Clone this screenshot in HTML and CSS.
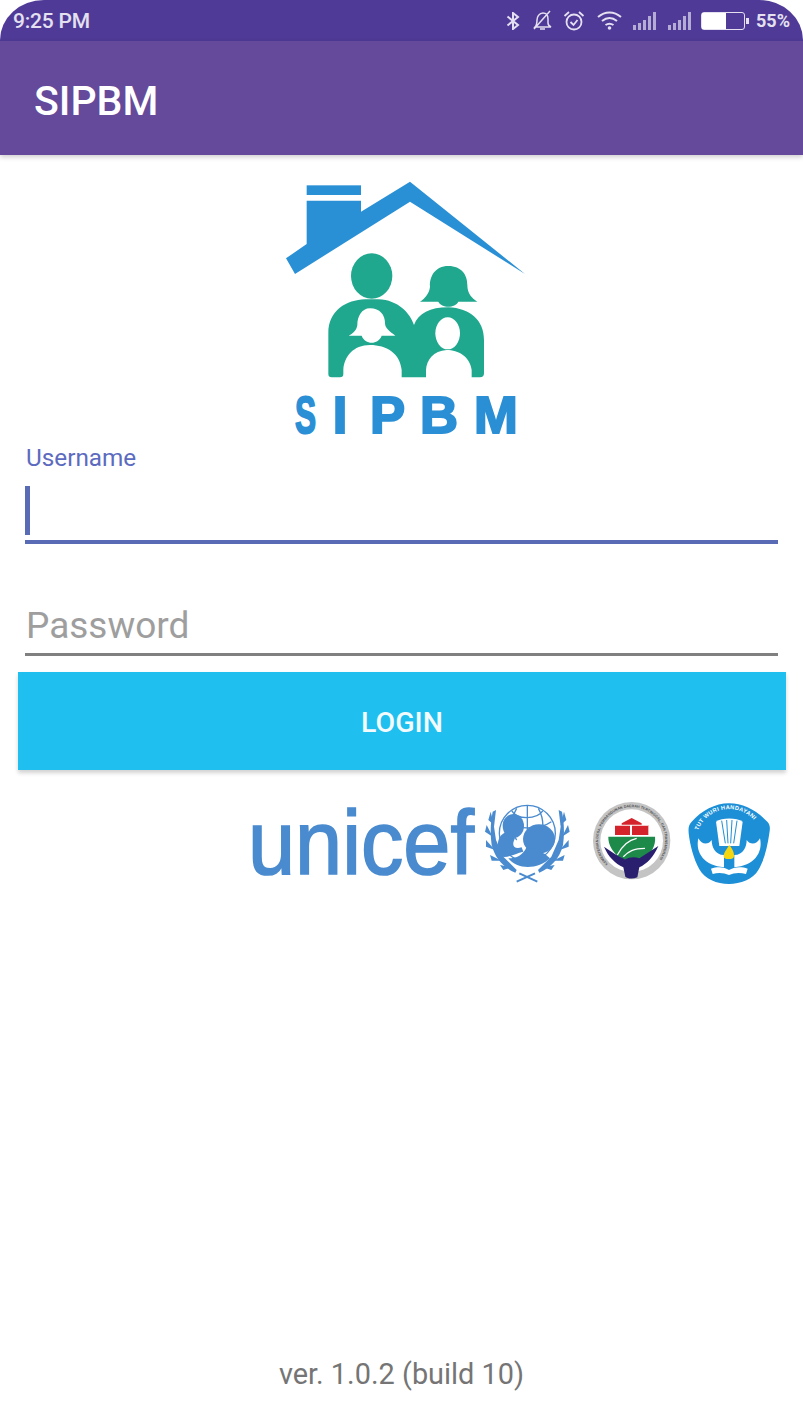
FILE: index.html
```html
<!DOCTYPE html>
<html>
<head>
<meta charset="utf-8">
<meta name="viewport" content="width=device-width, initial-scale=1.0">
<title>SIPBM</title>
<link rel="stylesheet" href="styles.css">
</head>
<body>
<div class="screen">
	<div class="status-bar">
		<span class="clock">9:25 PM</span>
		<div class="status-icons">
			<svg class="ico" width="14" height="18" viewBox="0 0 14 18"><path d="M1.500 4.500 12 13 7 17V1l5 4L1.500 13.500" fill="none" stroke="#e4e0f0" stroke-width="2"/></svg>
			<svg class="ico ico-bell" width="22" height="21" viewBox="0 0 22 21"><path d="M4 17c2-2 2-4 2-7s2-7 6-7 5 3 5 6v4c0 2 1 3 3 4zM9 19h5M3 19 19 1" fill="none" stroke="#e4e0f0" stroke-width="1.500"/></svg>
			<svg class="ico ico-alarm" width="22" height="22" viewBox="0 0 22 22"><circle cx="11" cy="12" r="7.500" fill="none" stroke="#e4e0f0" stroke-width="1.800"/><path d="M7.500 12l3 3 4-5M1.500 6 6 2M20.500 6 16 2" fill="none" stroke="#e4e0f0" stroke-width="1.800"/></svg>
			<svg class="ico ico-wifi" width="25" height="19" viewBox="0 0 25 19"><path d="M1 6c7-6 16-6 23 0M5 10c5-4 10-4 15 0M8.500 14c3-2 5-2 8 0" fill="none" stroke="#e4e0f0" stroke-width="2"/><circle cx="12.500" cy="17" r="1.800" fill="#e4e0f0"/></svg>
			<svg class="ico ico-signal" width="24" height="18" viewBox="0 0 24 18"><path d="M0 13h3v5H0zM5 11h3v7H5zM10 8h3v10h-3zM15 4h3v14h-3zM20 0h3v18h-3z" fill="#b5acd6"/></svg>
			<svg class="ico ico-signal" width="24" height="18" viewBox="0 0 24 18"><path d="M0 13h3v5H0zM5 11h3v7H5zM10 8h3v10h-3zM15 4h3v14h-3zM20 0h3v18h-3z" fill="#b5acd6"/></svg>
			<div class="battery"><div class="battery-fill"></div></div>
			<span class="percent">55%</span>
		</div>
	</div>
	<div class="app-bar">SIPBM</div>

	<svg class="logo" width="270" height="275" viewBox="0 0 810 825" role="img" aria-label="SIPBM">
		<path class="roof" d="M48 265 110 222V92H273V125L420 35 765 312 420 95 75 312Z"/>
		<rect class="roof" x="110" y="46" width="163" height="29"/>
		<ellipse class="fam" cx="305" cy="318" rx="62" ry="68"/>
		<path class="fam" d="M535 288C495 288 478 320 480 350 478 370 465 385 450 395H505C515 415 555 415 565 395H622C605 385 592 370 592 345 592 315 575 288 535 288Z"/>
		<path class="fam" d="M175 612V490C175 420 230 390 285 388H325C385 390 420 430 432 465 445 430 480 412 535 412 600 415 642 450 642 510V610Q642 622 630 622H605V600C600 560 565 540 530 540 490 542 470 570 468 600V622H395V600C390 550 350 525 300 525 250 525 222 560 220 600V612Q220 622 210 622H185Q175 622 175 612Z"/>
		<path class="hole" d="M300 415C275 415 262 440 262 465 260 480 250 490 236 497H275C285 525 325 525 335 497H376C360 485 345 475 345 460 345 435 330 415 300 415Z"/>
		<ellipse class="hole" cx="533" cy="490" rx="37" ry="48"/>
		<text class="logo-s" transform="translate(75 788) scale(.6 1)">S</text>
		<text class="logo-name" x="188 300 450 612" y="788">IPBM</text>
	</svg>

	<div class="field">
		<div class="field-label">Username</div>
		<div class="field-input focused"><span class="caret"></span></div>
	</div>
	<div class="field">
		<div class="field-input placeholder">Password</div>
	</div>
	<div class="login-btn">LOGIN</div>

	<div class="partners">
		<svg class="partner-art" width="340" height="100" viewBox="0 0 1020 300" role="img" aria-label="unicef">
			<text class="unicef" x="24" y="253" textLength="678" lengthAdjust="spacingAndGlyphs">unicef</text>
			<g class="globe">
				<circle cx="862" cy="130" r="84"/>
				<path d="M862 46V120M815 62C830 90 890 90 909 62M790 95C820 120 900 120 934 95M830 55C810 90 815 130 830 150M895 55C915 90 910 130 900 150"/>
			</g>
			<g class="emblem-fill">
				<ellipse cx="820" cy="108" rx="32" ry="36"/>
				<path d="M800 125C772 135 768 165 780 198 800 208 825 190 850 185L845 172C825 178 812 170 825 145Z"/>
				<ellipse cx="897" cy="147" rx="48" ry="44"/>
				<path d="M860 170C850 195 830 205 805 205 830 240 895 240 930 205 915 190 905 185 895 185Z"/>
				<path d="M752 65 762 105 745 90ZM740 105 758 140 735 125ZM738 150 765 180 738 170ZM750 195 785 212 755 212ZM780 225 815 232 790 240ZM972 65 962 105 979 90ZM984 105 966 140 989 125ZM986 150 959 180 986 170ZM974 195 939 212 969 212ZM944 225 909 232 934 240Z"/>
				<path d="M758 65 768 60 762 110 768 150 790 200 830 240 826 248C790 232 765 205 755 165 750 130 752 95 758 65ZM966 65 956 60 962 110 956 150 934 200 894 240 898 248C934 232 959 205 969 165 974 130 972 95 966 65Z"/>
			</g>
			<path class="emblem-ties" d="M830 275 885 250M892 275 838 250"/>
		</svg>
		<svg class="partner-art" width="200" height="100" viewBox="0 0 600 300" role="img" aria-label="Kementerian Desa">
			<circle cx="155" cy="152" r="116" fill="#c4c4c4"/>
			<circle cx="155" cy="152" r="94" fill="#fff"/>
			<path id="ring1" d="M84 222A100 100 0 1 1 226 222" fill="none"/>
			<text class="seal-text"><textPath href="#ring1">KEMENTERIAN DESA, PEMBANGUNAN DAERAH TERTINGGAL, DAN TRANSMIGRASI</textPath></text>
			<path fill="#d4232a" d="M125 100 155 84 185 100V105H205V135H105V105H125Z"/>
			<path fill="#fff" d="M150 106h6v30h-6zM105 104h100v3H105z"/>
			<path fill="#1e8a4a" d="M85 140H225C228 165 215 190 190 208H125C100 190 84 165 85 140Z"/>
			<path fill="none" stroke="#fff" stroke-width="4" d="M112 195C125 170 145 150 170 145M130 200C145 185 160 175 195 175"/>
			<path fill="#2a1f6e" d="M72 170C95 185 115 200 135 208 150 200 165 200 178 205L235 168C222 200 200 222 178 232L172 262C158 268 142 266 136 260L130 232C105 220 85 200 72 170Z"/>
			<path fill="#1c8fd6" d="M447 40C490 40 530 62 562 95 572 105 570 118 568 130 562 170 555 205 535 240 520 268 480 282 447 282 410 282 375 268 358 238 340 205 330 165 326 130 325 115 325 105 335 95 365 62 405 40 447 40Z"/>
			<path id="ring2" d="M350 135A100 100 0 0 1 545 135" fill="none"/>
			<text class="seal-text seal-light"><textPath href="#ring2" startOffset="14">TUT WURI HANDAYANI</textPath></text>
			<path fill="#fff" d="M408 95C425 82 470 82 488 95L478 168H418Z"/>
			<path stroke="#1c8fd6" stroke-width="3" d="M425 92 436 160M440 90 444 160M456 90 452 160M471 92 461 160"/>
			<path fill="#fff" d="M355 145C345 190 375 228 432 232V195C405 195 395 170 395 150 385 165 365 165 355 145ZM540 145C550 190 520 228 463 232V195C490 195 500 170 500 150 510 165 530 165 540 145Z"/>
			<path fill="#f5d711" d="M448 165C460 180 462 190 462 197 462 205 455 207 447 207 438 207 431 205 431 197 431 190 438 180 448 165Z"/>
			<path fill="#fff" d="M393 236C415 228 435 232 447 240 460 232 482 228 503 236L498 252C480 247 462 248 447 255 432 248 414 247 398 252Z"/>
		</svg>
	</div>

	<div class="version">ver. 1.0.2 (build 10)</div>
</div>
</body>
</html>
```
FILE: styles.css
```css
* {
	box-sizing: border-box;
}
body {
	margin: 0;
	background: #fff;
	font-family: Roboto, "Liberation Sans", sans-serif;
}
.screen {
	display: flex;
	flex-direction: column;
	height: 1425px;
	width: 803px;
	overflow: hidden;
}
.status-bar {
	display: flex;
	align-items: center;
	justify-content: space-between;
	height: 41px;
	padding: 0 13px 0 13px;
	background: #4f3a97;
	border-radius: 44px 44px 0 0 / 40px 40px 0 0;
	color: #e4e0f0;
}
.clock {
	font-size: 21px;
	font-weight: 500;
	letter-spacing: -0.2px;
}
.status-icons {
	display: flex;
	align-items: center;
}
.ico {
	display: block;
}
.ico-bell {
	margin-left: 11px;
}
.ico-alarm {
	margin-left: 10px;
}
.ico-wifi {
	margin-left: 12px;
}
.ico-signal {
	margin-left: 11px;
}
.battery {
	position: relative;
	width: 44px;
	height: 18px;
	margin-left: 9px;
	border: 1.5px solid #e4e0f0;
	border-radius: 3px;
}
.battery::after {
	content: "";
	position: absolute;
	right: -5px;
	top: 5px;
	width: 3px;
	height: 6px;
	background: #e4e0f0;
}
.battery-fill {
	width: 24px;
	height: 100%;
	background: #fff;
}
.percent {
	margin-left: 11px;
	font-size: 18px;
	font-weight: 700;
}
.app-bar {
	display: flex;
	align-items: center;
	height: 114px;
	padding: 5px 0 0 34px;
	background: #654a9b;
	box-shadow: 0 2px 5px rgba(0, 0, 0, 0.2);
	color: #fff;
	font-size: 41px;
	font-weight: 500;
}

.logo {
	display: block;
	flex: none;
	margin: 15px 0 0 270px;
}
.roof {
	fill: #2a90d6;
}
.fam {
	fill: #1fa88e;
}
.hole {
	fill: #fff;
}
.logo-s,
.logo-name {
	fill: #2a8fd5;
	stroke: #2a8fd5;
	stroke-width: 6;
	font-family: "Liberation Sans", sans-serif;
	font-size: 158px;
	font-weight: 700;
}

.field {
	margin: 0 25px;
}
.field-label {
	height: 27px;
	padding-left: 1px;
	color: #5c6bc0;
	font-size: 24.300px;
	line-height: 26px;
}
.field-input {
	height: 72px;
	border-bottom: 4px solid #5a6bb5;
}
.focused {
	padding-top: 14px;
}
.caret {
	display: block;
	width: 5px;
	height: 49px;
	background: #5a6bb5;
}
.placeholder {
	height: 112px;
	padding: 61px 0 0 1px;
	border-bottom: 3px solid #808080;
	color: #9e9e9e;
	font-size: 37px;
	line-height: 42px;
}
.login-btn {
	display: flex;
	align-items: center;
	justify-content: center;
	height: 98px;
	margin: 16px 17px 0 18px;
	padding-top: 2px;
	background: #1fc0ef;
	box-shadow: 0 3px 4px rgba(0, 0, 0, 0.18);
	color: #f4fbfe;
	font-size: 28.500px;
	font-weight: 500;
}

.partners {
	display: flex;
	flex: none;
	margin: 20px 0 0 240px;
}
.partner-art {
	overflow: visible;
}
.unicef {
	fill: #4a8bcf;
	stroke: #4a8bcf;
	stroke-width: 5;
	font-family: "Liberation Sans", sans-serif;
	font-size: 272px;
}
.globe {
	fill: none;
	stroke: #4a8bcf;
	stroke-width: 4;
}
.emblem-fill {
	fill: #4a8bcf;
}
.emblem-ties {
	fill: none;
	stroke: #4a8bcf;
	stroke-width: 6;
}
.seal-text {
	fill: #555;
	font-family: "Liberation Sans", sans-serif;
	font-size: 11px;
	font-weight: 700;
}
.seal-light {
	fill: #fff;
	font-size: 17px;
	letter-spacing: 1px;
}

.version {
	margin-top: auto;
	padding-bottom: 35px;
	color: #757575;
	font-size: 28.900px;
	line-height: 32px;
	text-align: center;
}
```
